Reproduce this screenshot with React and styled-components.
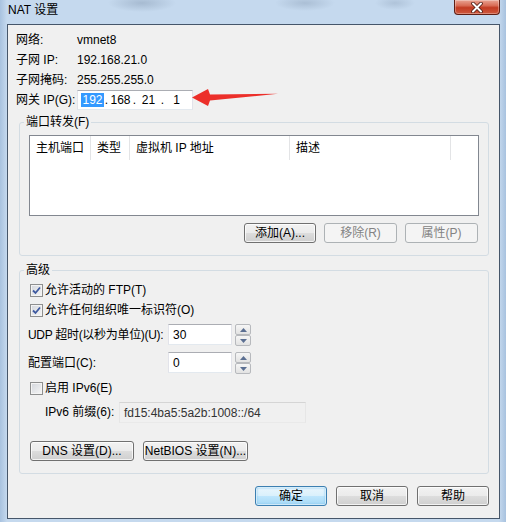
import React from 'react';
import styled, { createGlobalStyle, css } from 'styled-components';

const Global = createGlobalStyle`
  html, body { margin: 0; padding: 0; }
  body {
    width: 506px; height: 522px; overflow: hidden;
    font-family: "Liberation Sans", "Noto Sans CJK SC", sans-serif;
    font-size: 12px; color: #000;
  }
  * { box-sizing: border-box; }
`;

const Frame = styled.div`
  position: relative;
  width: 506px; height: 522px;
  display: flex; flex-direction: column;
  background:
    radial-gradient(ellipse 34px 9px at 142px 3px, rgba(110,130,155,0.35), transparent),
    radial-gradient(ellipse 30px 8px at 305px 3px, rgba(110,130,155,0.30), transparent),
    radial-gradient(ellipse 20px 7px at 395px 3px, rgba(110,130,155,0.25), transparent),
    linear-gradient(90deg, #a8c2df 0px, #c5d9ee 7px, #c5d9ee 499px, #a8c2df 506px);
`;

const TitleBar = styled.div`
  height: 24px; flex: none;
  display: flex; justify-content: space-between; align-items: flex-start;
  padding: 0 6px 0 8px;
`;

const Title = styled.div`
  line-height: 20px; font-size: 12px; color: #000;
`;

const CloseButton = styled.div`
  width: 46px; height: 15px;
  border: 1px solid #5e1e14; border-top: none; border-radius: 0 0 4px 4px;
  background: linear-gradient(#e9a493 0%, #d86c55 40%, #c23b22 55%, #cf5a3f 100%);
  box-shadow: inset 0 0 0 1px rgba(255,255,255,0.3);
  display: flex; align-items: center; justify-content: center;
`;

const Client = styled.div`
  margin: 0 6px 0 7px;
  height: 495px;
  border: 1px solid #46566a;
  background: #f0f0f0;
  display: flex; flex-direction: column;
`;

const InfoGrid = styled.div`
  margin-top: 5px; padding-left: 8px;
  display: grid; grid-template-columns: 61px auto; grid-auto-rows: 20px;
  align-items: center; line-height: 20px;
`;

const Field = styled.div`
  height: ${p => p.$h || 21}px;
  width: ${p => p.$w}px;
  border-style: solid; border-width: 1px;
  border-color: #abadb3 #e2e3ea #e3e9ef #e2e3ea;
  background: ${p => (p.$disabled ? '#f0f0f0' : '#fff')};
  ${p => p.$disabled && css`border-color: #d5d5d5 #e6e6e6 #e9e9e9 #e6e6e6;`}
  padding-left: ${p => p.$pl ?? 4}px;
  display: flex; align-items: center;
  color: ${p => (p.$disabled ? '#333' : '#000')};
`;

const IpSeg = styled.span`
  width: 23px; text-align: center; line-height: 14px;
`;
const IpDot = styled.span`
  width: 5px; text-align: center;
`;
const Selected = styled.span`
  background: #3399ff; color: #fff; padding: 0 1px;
`;

const Group = styled.fieldset`
  margin: ${p => p.$mt}px 10px 0 11px;
  min-width: 0;
  padding: ${p => p.$pt}px 9px 12px 9px;
  border: 1px solid #d3dce3;
  border-radius: 3px;
`;

const Legend = styled.legend`
  padding: 0 2px; margin-left: -5px;
  line-height: 14px; font-size: 12px;
`;

const ListView = styled.div`
  height: 81px; border: 1px solid #828790; background: #fff;
`;

const Header = styled.div`
  height: 24px;
  display: grid; grid-template-columns: 61px 39px 160px 161px 1fr;
`;

const HeadCell = styled.div`
  line-height: 24px; padding-left: 6px; white-space: nowrap;
  border-right: ${p => (p.$last ? 'none' : '1px solid #e3e4e6')};
`;

const ButtonRow = styled.div`
  margin-top: ${p => p.$mt || 0}px;
  display: flex; justify-content: ${p => p.$justify || 'flex-end'};
  gap: ${p => p.$gap || 8}px;
  padding: 0 ${p => p.$pr || 0}px 0 ${p => p.$pl || 0}px;
`;

const Button = styled.div`
  width: ${p => p.$w}px; height: 20px;
  border: 1px solid #707070; border-radius: 3px;
  background: linear-gradient(#f2f2f2 0%, #ebebeb 50%, #dddddd 51%, #cfcfcf 100%);
  box-shadow: inset 0 0 0 1px rgba(255,255,255,0.75);
  display: flex; align-items: center; justify-content: center;
  line-height: 18px; white-space: nowrap;
  ${p => p.$disabled && css`
    border-color: #adb2b5; background: #f4f4f4; color: #838383; box-shadow: none;
  `}
  ${p => p.$default && css`
    border-color: #3c7fb1;
    background: linear-gradient(#eaf6fd 0%, #d9f0fc 50%, #bee6fd 51%, #a7d9f5 100%);
    box-shadow: inset 0 0 0 1px rgba(255,255,255,0.6), inset 0 0 2px 1px #7fc4ee;
  `}
`;

const CheckRow = styled.div`
  height: 20px; padding-left: 1px;
  display: flex; align-items: center; gap: 2px; line-height: 20px;
`;

const Box = styled.div`
  width: 13px; height: 13px; flex: none;
  border: 1px solid #8e8f8f;
  background: linear-gradient(135deg, #d3d6dc 0%, #f6f6f6 100%);
  box-shadow: inset 0 0 0 1px #f4f4f4;
  display: flex; align-items: center; justify-content: center;
`;

const FormRow = styled.div`
  margin-top: ${p => p.$mt}px;
  margin-left: ${p => p.$ml || 0}px;
  height: ${p => p.$h || 22}px;
  display: flex; align-items: ${p => p.$align || 'flex-start'};
  padding-left: ${p => p.$pl || 0}px;
`;

const FormLabel = styled.div`
  width: ${p => p.$w}px; flex: none; line-height: ${p => p.$lh || 22}px; white-space: nowrap;
  letter-spacing: ${p => p.$ls || 0}px;
`;

const Spin = styled.div`
  margin-left: 3px; width: 16px; height: 22px;
  display: flex; flex-direction: column;
`;

const SpinBtn = styled.div`
  height: 11px; border: 1px solid #b7b9bd; border-radius: 2px;
  background: linear-gradient(#f6f6f6, #e2e2e2);
  display: flex; align-items: center; justify-content: center;
`;

const Arrow = styled.svg`
  position: absolute; left: 188px; top: 85px;
`;

const Check = () => (
  <svg width="9" height="9" viewBox="0 0 9 9">
    <path d="M1 4.5 L3.5 7 L8 1.5" fill="none" stroke="#3f5aa0" strokeWidth="1.8" />
  </svg>
);

const Tri = ({ up }) => (
  <svg width="7" height="4" viewBox="0 0 7 4">
    <path d={up ? 'M0 4 L3.5 0 L7 4Z' : 'M0 0 L3.5 4 L7 0Z'} fill="#5b6f92" />
  </svg>
);

const SpinBox = ({ value }) => (
  <>
    <Field $w={64} $h={21} $pl={4}>{value}</Field>
    <Spin>
      <SpinBtn><Tri up /></SpinBtn>
      <SpinBtn><Tri /></SpinBtn>
    </Spin>
  </>
);

export default function App() {
  return (
    <>
      <Global />
      <Frame>
        <TitleBar>
          <Title>NAT 设置</Title>
          <CloseButton>
            <svg width="14" height="11" viewBox="0 0 14 11">
              <path d="M3 1.5 L11 9.5 M11 1.5 L3 9.5" stroke="#4a1a12" strokeWidth="3.6" strokeLinecap="round" />
              <path d="M3 1.5 L11 9.5 M11 1.5 L3 9.5" stroke="#fff" strokeWidth="2" strokeLinecap="round" />
            </svg>
          </CloseButton>
        </TitleBar>
        <Client>
          <InfoGrid>
            <span>网络:</span><span>vmnet8</span>
            <span>子网 IP:</span><span>192.168.21.0</span>
            <span>子网掩码:</span><span>255.255.255.0</span>
            <span>网关 IP(G):</span>
            <Field $w={116} $h={20} $pl={3}>
              <IpSeg><Selected>192</Selected></IpSeg><IpDot>.</IpDot>
              <IpSeg>168</IpSeg><IpDot>.</IpDot>
              <IpSeg>21</IpSeg><IpDot>.</IpDot>
              <IpSeg>1</IpSeg>
            </Field>
          </InfoGrid>

          <Group $mt={5} $pt={6}>
            <Legend>端口转发(F)</Legend>
            <ListView>
              <Header>
                <HeadCell>主机端口</HeadCell>
                <HeadCell>类型</HeadCell>
                <HeadCell>虚拟机 IP 地址</HeadCell>
                <HeadCell>描述</HeadCell>
                <HeadCell $last />
              </Header>
            </ListView>
            <ButtonRow $mt={7} $gap={8} $pr={1}>
              <Button $w={72}>添加(A)...</Button>
              <Button $w={73} $disabled>移除(R)</Button>
              <Button $w={73} $disabled>属性(P)</Button>
            </ButtonRow>
          </Group>

          <Group $mt={7} $pt={3}>
            <Legend>高级</Legend>
            <CheckRow><Box><Check /></Box>允许活动的 FTP(T)</CheckRow>
            <CheckRow><Box><Check /></Box>允许任何组织唯一标识符(O)</CheckRow>
            <FormRow $mt={4} $ml={-1}>
              <FormLabel $w={140} $ls={-0.3}>UDP 超时(以秒为单位)(U):</FormLabel>
              <SpinBox value="30" />
            </FormRow>
            <FormRow $mt={6} $ml={-1}>
              <FormLabel $w={140}>配置端口(C):</FormLabel>
              <SpinBox value="0" />
            </FormRow>
            <FormRow $mt={4} $h={20} $align="center">
              <CheckRow><Box />启用 IPv6(E)</CheckRow>
            </FormRow>
            <FormRow $mt={4} $h={21} $pl={16}>
              <FormLabel $w={74} $lh={21}>IPv6 前缀(6):</FormLabel>
              <Field $w={187} $h={21} $pl={4} $disabled>fd15:4ba5:5a2b:1008::/64</Field>
            </FormRow>
            <ButtonRow $mt={18} $justify="flex-start" $gap={9} $pl={1}>
              <Button $w={104}>DNS 设置(D)...</Button>
              <Button $w={105}>NetBIOS 设置(N)...</Button>
            </ButtonRow>
          </Group>

          <ButtonRow $mt={12} $pr={10} $gap={9}>
            <Button $w={72} $default>确定</Button>
            <Button $w={72}>取消</Button>
            <Button $w={72}>帮助</Button>
          </ButtonRow>
        </Client>
        <Arrow width="92" height="24" viewBox="188 85 92 24">
          <polygon points="192,97.5 208,89 210,94.5 278,93.8 210,100.5 208,106" fill="#ec2f2a" />
        </Arrow>
      </Frame>
    </>
  );
}
